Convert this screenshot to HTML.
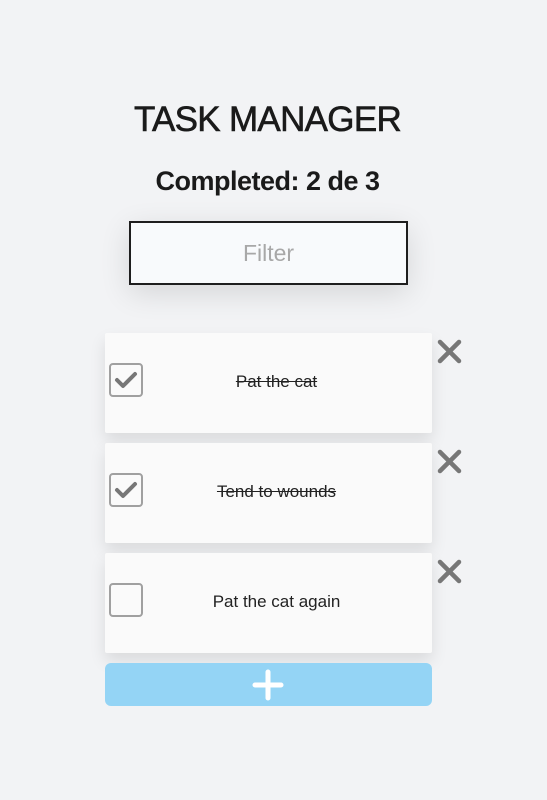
<!DOCTYPE html>
<html><head><style>
body{margin:0;width:547px;height:800px;background:#f2f3f5;font-family:"Liberation Sans",sans-serif;position:relative;overflow:hidden}
.a{position:absolute}
h1{position:absolute;top:100px;left:-6px;width:547px;text-align:center;margin:0;font-size:35px;font-weight:normal;color:#1a1a1a;letter-spacing:-0.7px;-webkit-text-stroke:0.6px #1a1a1a}
h2{position:absolute;top:166px;left:-6px;width:547px;text-align:center;margin:0;font-size:27px;font-weight:bold;color:#1a1a1a;letter-spacing:-0.5px}
.filter{left:129px;top:221px;width:275px;height:60px;border:2px solid #1e1e1e;background:#f8fafc;box-shadow:0 8px 30px rgba(0,0,0,.12);text-align:center;line-height:60px;font-size:23px;color:#a8a8a8}
.card{left:105px;width:327px;height:100px;background:#fafafa;box-shadow:0 8px 16px rgba(0,0,0,.1);border-radius:2px}
.cb{position:absolute;left:4px;top:30px;width:30px;height:30px;border:2px solid #a0a0a0;border-radius:4px}
.t{position:absolute;left:0;width:343px;top:39px;text-align:center;font-size:17px;color:#222}
.x{left:437px;width:25px;height:25px}
.plus{left:105px;top:663px;width:327px;height:43px;background:#94d4f5;border-radius:6px}
</style></head><body>
<h1>TASK MANAGER</h1>
<h2>Completed: 2 de 3</h2>
<div class="a filter">Filter</div>

<div class="a card" style="top:333px"><div class="cb"><svg width="30" height="30"><path d="M6 15l6 6 12-12" stroke="#777" stroke-width="4" fill="none" stroke-linecap="round" stroke-linejoin="round"/></svg></div><div class="t" style="text-decoration:line-through">Pat the cat</div></div>
<div class="a card" style="top:443px"><div class="cb"><svg width="30" height="30"><path d="M6 15l6 6 12-12" stroke="#777" stroke-width="4" fill="none" stroke-linecap="round" stroke-linejoin="round"/></svg></div><div class="t" style="text-decoration:line-through">Tend to wounds</div></div>
<div class="a card" style="top:553px"><div class="cb"></div><div class="t">Pat the cat again</div></div>

<svg class="a x" style="top:339px" viewBox="0 0 25 25"><path d="M3 3L22 22M22 3L3 22" stroke="#777" stroke-width="4.5" stroke-linecap="round"/></svg>
<svg class="a x" style="top:449px" viewBox="0 0 25 25"><path d="M3 3L22 22M22 3L3 22" stroke="#777" stroke-width="4.5" stroke-linecap="round"/></svg>
<svg class="a x" style="top:559px" viewBox="0 0 25 25"><path d="M3 3L22 22M22 3L3 22" stroke="#777" stroke-width="4.5" stroke-linecap="round"/></svg>

<div class="a plus"><svg class="a" style="left:147px;top:6px" width="32" height="32"><path d="M16 3V29M3 16H29" stroke="#fff" stroke-width="5" stroke-linecap="round"/></svg></div>
</body></html>
